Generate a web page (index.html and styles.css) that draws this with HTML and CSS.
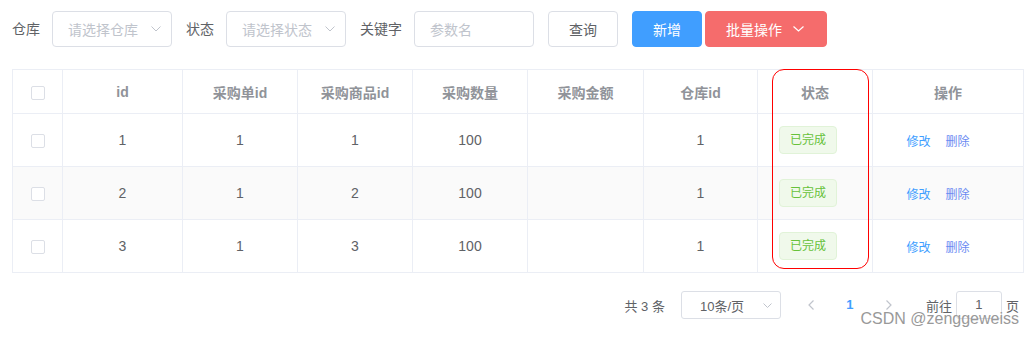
FILE: index.html
```html
<!DOCTYPE html>
<html lang="zh-CN">
<head>
<meta charset="utf-8">
<title>采购单</title>
<link rel="stylesheet" href="styles.css">
</head>
<body>
<div class="page">
  <div class="toolbar">
    <span class="label">仓库</span>
    <div class="select"><span>请选择仓库</span><svg class="arrow" width="10" height="6" viewBox="0 0 10 6"><polyline points="0.5,0.5 5,5 9.5,0.5" fill="none" stroke="#c0c4cc" stroke-width="1"/></svg></div>
    <span class="label">状态</span>
    <div class="select"><span>请选择状态</span><svg class="arrow" width="10" height="6" viewBox="0 0 10 6"><polyline points="0.5,0.5 5,5 9.5,0.5" fill="none" stroke="#c0c4cc" stroke-width="1"/></svg></div>
    <span class="label">关键字</span>
    <div class="input"><span>参数名</span></div>
    <button class="btn">查询</button>
    <button class="btn primary">新增</button>
    <button class="btn danger"><span>批量操作</span><svg width="11" height="6" viewBox="0 0 11 6"><polyline points="0.5,0.5 5.5,5 10.5,0.5" fill="none" stroke="#fff" stroke-width="1.2"/></svg></button>
  </div>

  <div class="table-wrap">
    <table class="grid">
      <colgroup>
        <col class="c-sel"><col class="c-id"><col class="c-n"><col class="c-n"><col class="c-n"><col class="c-n2"><col class="c-n3"><col class="c-n"><col class="c-op">
      </colgroup>
      <thead>
        <tr>
          <th><span class="check"></span></th>
          <th>id</th>
          <th>采购单id</th>
          <th>采购商品id</th>
          <th>采购数量</th>
          <th>采购金额</th>
          <th>仓库id</th>
          <th>状态</th>
          <th>操作</th>
        </tr>
      </thead>
      <tbody>
        <tr>
          <td><span class="check"></span></td>
          <td>1</td><td>1</td><td>1</td><td>100</td><td></td><td>1</td>
          <td class="status"><span class="tag">已完成</span></td>
          <td class="ops"><a class="link edit">修改</a><a class="link del">删除</a></td>
        </tr>
        <tr class="stripe">
          <td><span class="check"></span></td>
          <td>2</td><td>1</td><td>2</td><td>100</td><td></td><td>1</td>
          <td class="status"><span class="tag">已完成</span></td>
          <td class="ops"><a class="link edit">修改</a><a class="link del">删除</a></td>
        </tr>
        <tr>
          <td><span class="check"></span></td>
          <td>3</td><td>1</td><td>3</td><td>100</td><td></td><td>1</td>
          <td class="status"><span class="tag">已完成</span></td>
          <td class="ops"><a class="link edit">修改</a><a class="link del">删除</a></td>
        </tr>
      </tbody>
    </table>
    <div class="highlight"></div>
  </div>

  <div class="pagination">
    <span class="total">共 3 条</span>
    <div class="sizes"><span>10条/页</span><svg class="arrow" width="9" height="5" viewBox="0 0 9 5"><polyline points="0.5,0.5 4.5,4.5 8.5,0.5" fill="none" stroke="#c0c4cc" stroke-width="1"/></svg></div>
    <span class="pbtn"><svg width="6" height="10" viewBox="0 0 6 10"><polyline points="5.5,0.5 1,5 5.5,9.5" fill="none" stroke="#c0c4cc" stroke-width="1.2"/></svg></span>
    <span class="pager">1</span>
    <span class="pbtn"><svg width="6" height="10" viewBox="0 0 6 10"><polyline points="0.5,0.5 5,5 0.5,9.5" fill="none" stroke="#c0c4cc" stroke-width="1.2"/></svg></span>
    <span class="jump">前往</span>
    <div class="jump-input">1</div>
    <span class="jump-unit">页</span>
  </div>

  <div class="watermark">CSDN @zenggeweiss</div>
</div>
</body>
</html>
```

FILE: styles.css
```css
html, body {
  margin: 0;
  padding: 0;
  background: #fff;
}

body {
  font-family: "Liberation Sans", "Noto Sans CJK SC", Arial, sans-serif;
  color: #606266;
  font-size: 14px;
}

.page {
  position: relative;
  padding: 11px 12px 0;
  height: 326px;
}

/* toolbar */
.toolbar {
  display: flex;
  align-items: center;
  height: 36px;
}

.label {
  font-size: 14px;
  color: #606266;
  margin-right: 12px;
  line-height: 36px;
}

.select,
.input {
  width: 120px;
  height: 36px;
  box-sizing: border-box;
  border: 1px solid #dcdfe6;
  border-radius: 4px;
  display: flex;
  align-items: center;
  padding-left: 15px;
  font-size: 14px;
  color: #c0c4cc;
  margin-right: 14px;
}

.select .arrow {
  margin-left: auto;
  margin-right: 10px;
}

.btn {
  height: 36px;
  width: 70px;
  box-sizing: border-box;
  border: 1px solid #dcdfe6;
  border-radius: 4px;
  background: #fff;
  color: #606266;
  font-size: 14px;
  font-family: inherit;
  padding: 0;
  margin: 0 14px 0 0;
}

.btn.primary {
  background: #409eff;
  border-color: #409eff;
  color: #fff;
  margin-right: 3px;
}

.btn.danger {
  background: #f56c6c;
  border-color: #f56c6c;
  color: #fff;
  width: 122px;
  display: flex;
  align-items: center;
  padding-left: 20px;
  gap: 11px;
  margin-right: 0;
}

/* table */
.table-wrap {
  position: relative;
  margin-top: 22px;
}

.grid {
  width: 100%;
  border-collapse: collapse;
  table-layout: fixed;
  font-size: 14px;
}

.c-sel { width: 50px; }
.c-id { width: 120px; }
.c-n { width: 115px; }
.c-n2 { width: 116px; }
.c-n3 { width: 114px; }
.c-op { width: 151px; }

.grid th,
.grid td {
  border: 1px solid #ebeef5;
  text-align: center;
  padding: 0;
  vertical-align: middle;
}

.grid th {
  height: 43px;
  color: #909399;
  font-weight: bold;
}

.grid td {
  height: 52px;
  color: #606266;
}

.grid tr.stripe td {
  background: #fafafa;
}

.check {
  display: inline-block;
  width: 14px;
  height: 14px;
  box-sizing: border-box;
  border: 1px solid #dcdfe6;
  border-radius: 2px;
  background: #fff;
  vertical-align: middle;
}

.grid td.status {
  padding-right: 14px;
}

.tag {
  display: inline-block;
  height: 28px;
  line-height: 26px;
  padding: 0 10px;
  box-sizing: border-box;
  font-size: 12px;
  color: #67c23a;
  background: #f0f9eb;
  border: 1px solid #e1f3d8;
  border-radius: 4px;
  vertical-align: middle;
}

.grid td.ops {
  padding-right: 20px;
}

.link {
  font-size: 12px;
  cursor: pointer;
}

.link.edit {
  color: #409eff;
}

.link.del {
  color: #6b8af2;
  margin-left: 15px;
}

.highlight {
  position: absolute;
  left: 760px;
  top: 0;
  width: 97px;
  height: 200px;
  box-sizing: border-box;
  border: 1px solid #f00;
  border-radius: 12px;
  pointer-events: none;
}

/* pagination */
.pagination {
  display: flex;
  justify-content: flex-end;
  align-items: center;
  margin-top: 18px;
  height: 28px;
  font-size: 13px;
  color: #606266;
  padding-right: 4px;
}

.total {
  margin-right: 16px;
}

.sizes {
  width: 100px;
  height: 28px;
  box-sizing: border-box;
  border: 1px solid #dcdfe6;
  border-radius: 3px;
  display: flex;
  align-items: center;
  padding-left: 18px;
  margin-right: 15px;
}

.sizes .arrow {
  margin-left: auto;
  margin-right: 8px;
}

.pbtn {
  width: 30px;
  height: 28px;
  display: flex;
  align-items: center;
  justify-content: center;
}

.pager {
  width: 30px;
  margin: 0 9px;
  text-align: center;
  color: #409eff;
  font-weight: bold;
  line-height: 28px;
}

.jump {
  margin-left: 22px;
}

.jump-input {
  width: 46px;
  height: 28px;
  box-sizing: border-box;
  border: 1px solid #dcdfe6;
  border-radius: 3px;
  margin: 0 4px;
  text-align: center;
  line-height: 26px;
}

.watermark {
  position: absolute;
  right: 16px;
  top: 310px;
  font-size: 16px;
  color: #999;
  font-family: "Liberation Sans", Arial, sans-serif;
  white-space: nowrap;
}
```
